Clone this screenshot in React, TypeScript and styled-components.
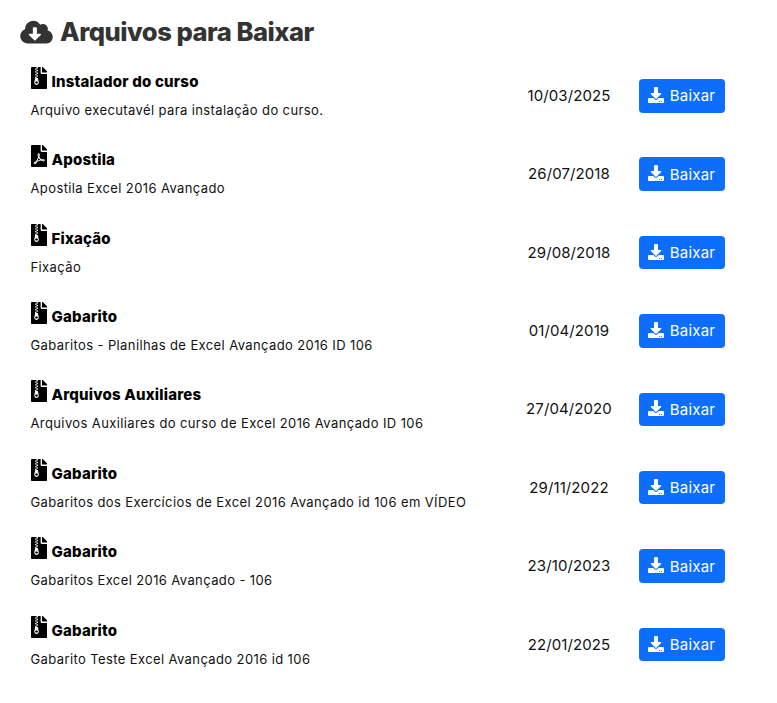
import React from "react";
import styled, { createGlobalStyle } from "styled-components";
import { FaCloudDownloadAlt, FaDownload, FaFileArchive, FaFilePdf } from "react-icons/fa";

const Global = createGlobalStyle`
  html, body { margin: 0; padding: 0; background: #fff; }
  body { font-family: "Inter", "Liberation Sans", sans-serif; color: #000; }
`;

const Page = styled.main`
  width: 777px;
  height: 703px;
  box-sizing: border-box;
  padding: 14px 52px 0 20px;
  overflow: hidden;
`;

const Heading = styled.h2`
  display: flex;
  align-items: center;
  gap: 7px;
  margin: 0 0 7.6px;
  height: 35px;
  font: 800 25.6px/35px "Inter", "Liberation Sans", sans-serif;
  letter-spacing: -0.5px;
  color: #333;
  svg { width: 33px; height: 26px; flex: none; }
`;

const List = styled.ul`
  list-style: none;
  margin: 0;
  padding: 0 0 0 10.5px;
`;

const Row = styled.li`
  display: grid;
  grid-template-columns: 1fr 116px 86px;
  column-gap: 13px;
  align-items: center;
  height: 78.4px;
`;

const Info = styled.div`
  display: flex;
  flex-direction: column;
  gap: 11px;
  margin-bottom: 5px;
`;

const Title = styled.div`
  display: flex;
  align-items: flex-end;
  gap: 4.5px;
  height: 22px;
  font-weight: 800;
  font-size: 15px;
  line-height: 16px;
  letter-spacing: 0.2px;
  svg { width: 16.5px; height: 22px; flex: none; margin-bottom: 1px; }
`;

const Desc = styled.p`
  margin: 0;
  font-size: 13px;
  line-height: 18px;
  letter-spacing: 0.39px;
  color: #111;
`;

const DateText = styled.span`
  text-align: center;
  padding-left: 2px;
  margin-bottom: 1px;
  font-size: 15px;
  letter-spacing: 0.1px;
  color: #111;
`;

const Button = styled.button`
  display: flex;
  align-items: center;
  justify-content: center;
  gap: 6px;
  width: 86px;
  height: 33.5px;
  padding: 0 1px 0 0;
  border: 0;
  border-radius: 4px;
  background: #0d6efd;
  color: #fff;
  font: 400 15px "Inter", "Liberation Sans", sans-serif;
  letter-spacing: 0.2px;
  svg { width: 16px; height: 16px; margin-top: -2px; }
`;

const files = [
  { icon: "zip", title: "Instalador do curso", desc: "Arquivo executavél para instalação do curso.", date: "10/03/2025" },
  { icon: "pdf", title: "Apostila", desc: "Apostila Excel 2016 Avançado", date: "26/07/2018" },
  { icon: "zip", title: "Fixação", desc: "Fixação", date: "29/08/2018" },
  { icon: "zip", title: "Gabarito", desc: "Gabaritos - Planilhas de Excel Avançado 2016 ID 106", date: "01/04/2019" },
  { icon: "zip", title: "Arquivos Auxiliares", desc: "Arquivos Auxiliares do curso de Excel 2016 Avançado ID 106", date: "27/04/2020" },
  { icon: "zip", title: "Gabarito", desc: "Gabaritos dos Exercícios de Excel 2016 Avançado id 106 em VÍDEO", date: "29/11/2022" },
  { icon: "zip", title: "Gabarito", desc: "Gabaritos Excel 2016 Avançado - 106", date: "23/10/2023" },
  { icon: "zip", title: "Gabarito", desc: "Gabarito Teste Excel Avançado 2016 id 106", date: "22/01/2025" },
];

export default function App() {
  return (
    <Page>
      <Global />
      <Heading>
        <FaCloudDownloadAlt />
        Arquivos para Baixar
      </Heading>
      <List>
        {files.map((f) => (
          <Row key={f.desc}>
            <Info>
              <Title>
                {f.icon === "pdf" ? <FaFilePdf /> : <FaFileArchive />}
                {f.title}
              </Title>
              <Desc>{f.desc}</Desc>
            </Info>
            <DateText>{f.date}</DateText>
            <Button>
              <FaDownload />
              Baixar
            </Button>
          </Row>
        ))}
      </List>
    </Page>
  );
}
